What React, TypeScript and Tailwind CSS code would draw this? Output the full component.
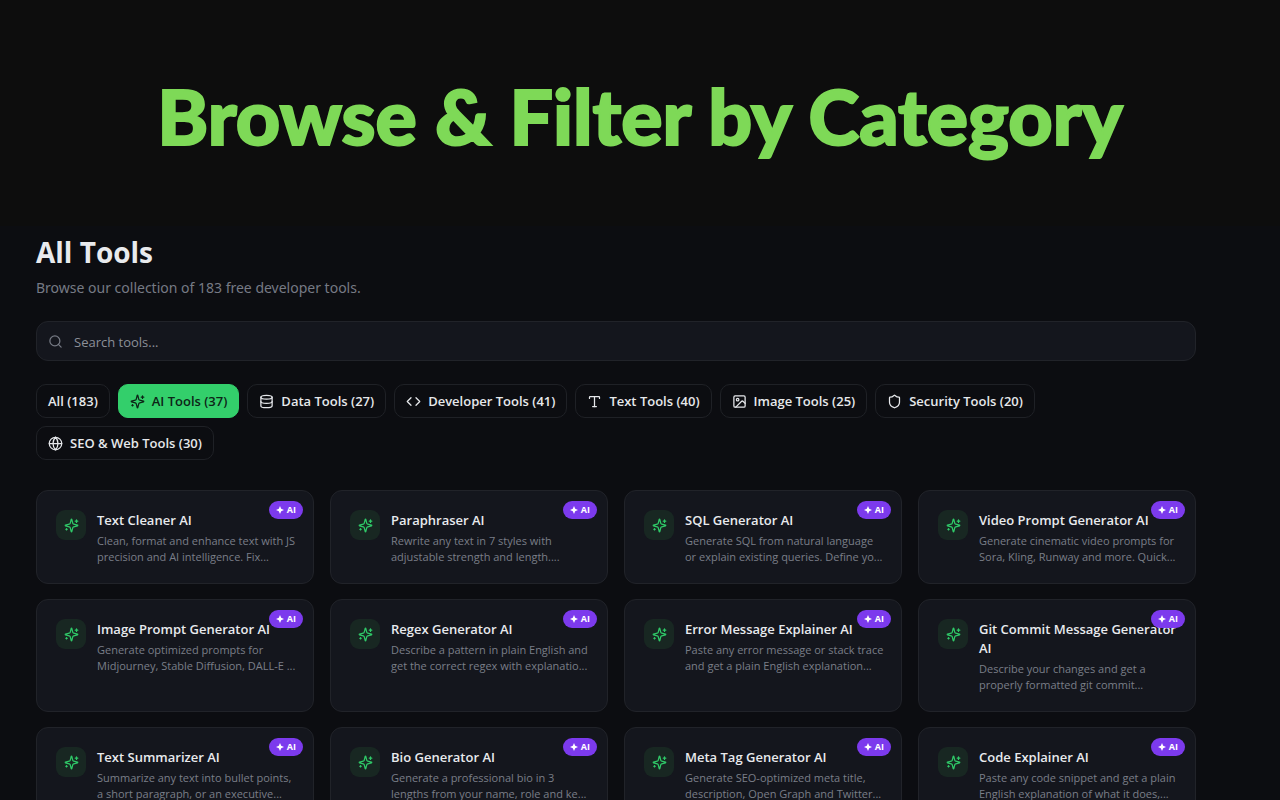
import { Code, Database, Globe, Image, Search, Shield, Type } from "lucide-react";
import type { ComponentType } from "react";

type IconType = ComponentType<{ className?: string }>;
type Category = { label: string; count: number; icon?: IconType; active?: boolean };
type Tool = { name: string; description: string };

function Sparkles({ className }: { className?: string }) {
  return (
    <svg
      viewBox="0 0 24 24"
      fill="none"
      stroke="currentColor"
      strokeWidth="2"
      strokeLinecap="round"
      strokeLinejoin="round"
      className={className}
      aria-hidden="true"
    >
      <path d="M9.937 15.5A2 2 0 0 0 8.5 14.063l-6.135-1.582a.5.5 0 0 1 0-.962L8.5 9.936A2 2 0 0 0 9.937 8.5l1.582-6.135a.5.5 0 0 1 .963 0L14.063 8.5A2 2 0 0 0 15.5 9.937l6.135 1.581a.5.5 0 0 1 0 .964L15.5 14.063a2 2 0 0 0-1.437 1.437l-1.582 6.135a.5.5 0 0 1-.963 0z" />
      <path d="M20 3v4" />
      <path d="M22 5h-4" />
      <path d="M4 17v2" />
      <path d="M5 18H3" />
    </svg>
  );
}

const categories: Category[] = [
  { label: "All", count: 183 },
  { label: "AI Tools", count: 37, icon: Sparkles, active: true },
  { label: "Data Tools", count: 27, icon: Database },
  { label: "Developer Tools", count: 41, icon: Code },
  { label: "Text Tools", count: 40, icon: Type },
  { label: "Image Tools", count: 25, icon: Image },
  { label: "Security Tools", count: 20, icon: Shield },
  { label: "SEO & Web Tools", count: 30, icon: Globe },
];

const tools: Tool[] = [
  { name: "Text Cleaner AI", description: "Clean, format and enhance text with JS\nprecision and AI intelligence. Fix..." },
  { name: "Paraphraser AI", description: "Rewrite any text in 7 styles with\nadjustable strength and length...." },
  { name: "SQL Generator AI", description: "Generate SQL from natural language\nor explain existing queries. Define yo..." },
  { name: "Video Prompt Generator AI", description: "Generate cinematic video prompts for\nSora, Kling, Runway and more. Quick..." },
  { name: "Image Prompt Generator AI", description: "Generate optimized prompts for\nMidjourney, Stable Diffusion, DALL-E ..." },
  { name: "Regex Generator AI", description: "Describe a pattern in plain English and\nget the correct regex with explanatio..." },
  { name: "Error Message Explainer AI", description: "Paste any error message or stack trace\nand get a plain English explanation..." },
  { name: "Git Commit Message Generator AI", description: "Describe your changes and get a\nproperly formatted git commit..." },
  { name: "Text Summarizer AI", description: "Summarize any text into bullet points,\na short paragraph, or an executive..." },
  { name: "Bio Generator AI", description: "Generate a professional bio in 3\nlengths from your name, role and ke..." },
  { name: "Meta Tag Generator AI", description: "Generate SEO-optimized meta title,\ndescription, Open Graph and Twitter..." },
  { name: "Code Explainer AI", description: "Paste any code snippet and get a plain\nEnglish explanation of what it does,..." },
];

function CategoryPill({ label, count, icon: Icon, active }: Category) {
  return (
    <button
      type="button"
      className={
        active
          ? "flex h-[34px] items-center gap-[7px] rounded-[10px] border border-[#33cf6b] bg-[#33cf6b] px-[11px] text-[13px] font-[550] text-[#0d2417]"
          : "flex h-[34px] items-center gap-[7px] rounded-[10px] border border-[#1f2126] bg-[#0c0d11] px-[11px] text-[13px] font-[550] text-[#e6e8eb]"
      }
    >
      {Icon && <Icon className="size-[15px] shrink-0" />}
      <span className="pt-px whitespace-nowrap">{`${label} (${count})`}</span>
    </button>
  );
}

function AiBadge() {
  return (
    <span className="absolute top-[10px] right-[10px] flex h-[18px] items-center gap-[3px] rounded-full bg-[#7c3aed] px-[7px] text-[9px] font-bold text-white">
      <svg viewBox="0 0 8 8" className="size-2 fill-current" aria-hidden="true">
        <path d="M4 0 5.2 2.8 8 4 5.2 5.2 4 8 2.8 5.2 0 4 2.8 2.8Z" />
      </svg>
      AI
    </span>
  );
}

function ToolCard({ name, description }: Tool) {
  return (
    <a
      href="#"
      className="relative flex items-start gap-[11px] rounded-xl border border-[#212329] bg-[#14161d] px-[19px] pt-[19px] pb-[18px]"
    >
      <span className="flex size-[30px] shrink-0 items-center justify-center rounded-[9px] bg-[#182722] text-[#2fc968]">
        <Sparkles className="size-[15px]" />
      </span>
      <span className="min-w-0 flex-1 pt-px">
        <span className="block text-[13px] leading-[19px] font-[550] text-[#e8eaed]">{name}</span>
        <span className="mt-[3px] block text-[11px] leading-4 whitespace-pre text-[#7a7e88]">{description}</span>
      </span>
      <AiBadge />
    </a>
  );
}

export default function App() {
  return (
    <div className="h-screen overflow-hidden bg-[#0c0d11] font-['Open_Sans','Noto_Sans',sans-serif]">
      <header className="flex h-[226px] items-center justify-center bg-[#0d0d0d] pt-1">
        <h1 className="text-center font-['Lato',sans-serif] text-[77px] leading-none font-black whitespace-nowrap text-[#7ed957] [-webkit-text-stroke:2px_#7ed957]">
          Browse &amp; Filter by Category
        </h1>
      </header>
      <main className="pt-2 pr-[84px] pl-9">
        <h2 className="text-[28px] leading-9 font-bold text-[#e8eaed]">All Tools</h2>
        <p className="mt-2 font-['Noto_Sans','Open_Sans',sans-serif] text-[14px] leading-5 text-[#767a84]">
          Browse our collection of 183 free developer tools.
        </p>
        <label className="mt-[23px] flex h-10 items-center gap-[11px] rounded-xl border border-[#212329] bg-[#14161d] px-[11px]">
          <Search className="size-[15px] shrink-0 text-[#767a84]" aria-hidden="true" />
          <input
            type="search"
            aria-label="Search tools"
            placeholder="Search tools..."
            className="min-w-0 flex-1 bg-transparent pt-[3px] text-[13px] text-[#e8eaed] outline-none placeholder:text-[#8b8f98]"
          />
        </label>
        <nav aria-label="Categories" className="mt-[23px] flex flex-wrap gap-2">
          {categories.map((category) => (
            <CategoryPill key={category.label} {...category} />
          ))}
        </nav>
        <section aria-label="Tools" className="mt-[30px] grid grid-cols-4 gap-x-4 gap-y-[15px]">
          {tools.map((tool) => (
            <ToolCard key={tool.name} {...tool} />
          ))}
        </section>
      </main>
    </div>
  );
}
